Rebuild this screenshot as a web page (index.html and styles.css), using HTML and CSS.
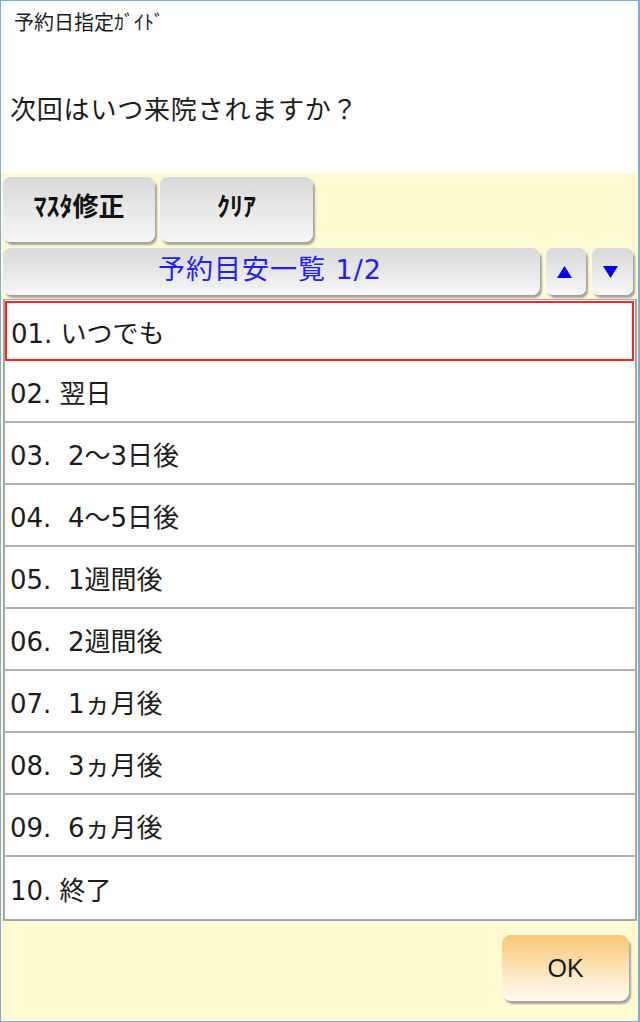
FILE: index.html
```html
<!DOCTYPE html>
<html lang="ja">
<head>
<meta charset="utf-8">
<title>予約日指定ガイド</title>
<link rel="stylesheet" href="styles.css">
</head>
<body>
<div class="window">
  <header class="top">
    <div class="title">予約日指定ｶﾞｲﾄﾞ</div>
    <div class="question">次回はいつ来院されますか？</div>
  </header>
  <main class="panel">
    <div class="toolbar">
      <div class="btn tool">ﾏｽﾀ修正</div>
      <div class="btn tool">ｸﾘｱ</div>
    </div>
    <div class="listhead">
      <div class="btn head">予約目安一覧 1/2</div>
      <div class="btn arrow">
        <svg width="15" height="12" viewBox="0 0 15 12"><polygon points="7.5,0 15,12 0,12" fill="#0000f0"/></svg>
      </div>
      <div class="btn arrow">
        <svg width="15" height="12" viewBox="0 0 15 12"><polygon points="0,0 15,0 7.5,12" fill="#0000f0"/></svg>
      </div>
    </div>
    <ul class="list">
      <li class="item selected">01. いつでも</li>
      <li class="item">02. 翌日</li>
      <li class="item">03.  2～3日後</li>
      <li class="item">04.  4～5日後</li>
      <li class="item">05.  1週間後</li>
      <li class="item">06.  2週間後</li>
      <li class="item">07.  1ヵ月後</li>
      <li class="item">08.  3ヵ月後</li>
      <li class="item">09.  6ヵ月後</li>
      <li class="item">10. 終了</li>
    </ul>
    <div class="footer">
      <div class="btn ok">OK</div>
    </div>
  </main>
</div>
</body>
</html>
```

FILE: styles.css
```css
* { box-sizing: border-box; }
html, body { margin: 0; padding: 0; background: #fff; }
body {
  font-family: "Noto Sans CJK JP", "Noto Sans", sans-serif;
  color: #1c1c1c;
}
.window {
  width: 640px;
  height: 1022px;
  border: 1px solid #7eaadc;
  border-right-width: 2px;
  display: flex;
  flex-direction: column;
  overflow: hidden;
}
.top {
  height: 172px;
  background: #fff;
  padding: 8px 0 0 13px;
  display: flex;
  flex-direction: column;
}
.title {
  font-size: 20px;
  line-height: 26px;
}
.question {
  margin-top: 56px;
  margin-left: -4px;
  font-size: 26px;
  line-height: 34px;
  letter-spacing: 0.8px;
}
.panel {
  flex: 1;
  background: #fffad2;
  padding: 4px 1px 0 2px;
  display: flex;
  flex-direction: column;
}
.btn {
  display: flex;
  align-items: center;
  justify-content: center;
  border-radius: 8px;
  background: linear-gradient(#d9d9d9, #f6f6f6);
  box-shadow: 2px 3px 2px #a3a3a3;
}
.toolbar {
  display: flex;
  gap: 5px;
  height: 65px;
}
.tool {
  width: 152px;
  height: 65px;
  padding-bottom: 10px;
  font-size: 26px;
  font-weight: bold;
  color: #111;
}
.tool + .tool { width: 153px; }
.listhead {
  display: flex;
  gap: 6px;
  height: 47px;
  margin-top: 6px;
}
.head {
  width: 537px;
  font-family: "DejaVu Sans", "Noto Sans CJK JP", sans-serif;
  font-size: 27px;
  color: #2020ff;
  letter-spacing: 1px;
  justify-content: flex-start;
  padding: 0 0 8px 155px;
}
.arrow {
  width: 40px;
  height: 47px;
  border-radius: 7px;
  padding-right: 4px;
}
.arrow + .arrow { width: 41px; }
.list {
  list-style: none;
  margin: 4px 0 0 0;
  padding: 0;
  width: 634px;
  border: 2px solid #a6a6a6;
  border-top-width: 1px;
  background: #fff;
}
.item {
  height: 62px;
  border-bottom: 2px solid #b0b0b0;
  display: flex;
  align-items: center;
  padding-left: 5px;
  font-family: "DejaVu Sans", "Noto Sans CJK JP", sans-serif;
  font-size: 26px;
  color: #1c1c1c;
  white-space: pre;
}
.item:last-child { border-bottom: none; }
.item.selected {
  border: 2px solid #ff2424;
  margin: 1px 1px 0 0;
  height: 60px;
  padding-left: 4px;
}
.footer {
  display: flex;
  justify-content: flex-end;
  padding: 14px 8px 0 0;
}
.ok {
  width: 127px;
  height: 66px;
  border-radius: 9px;
  background: linear-gradient(#f7c675, #fde6bd 55%, #fffaf2);
  font-family: "Liberation Sans", Arial, sans-serif;
  font-size: 25px;
  color: #1a1a1a;
}
```
